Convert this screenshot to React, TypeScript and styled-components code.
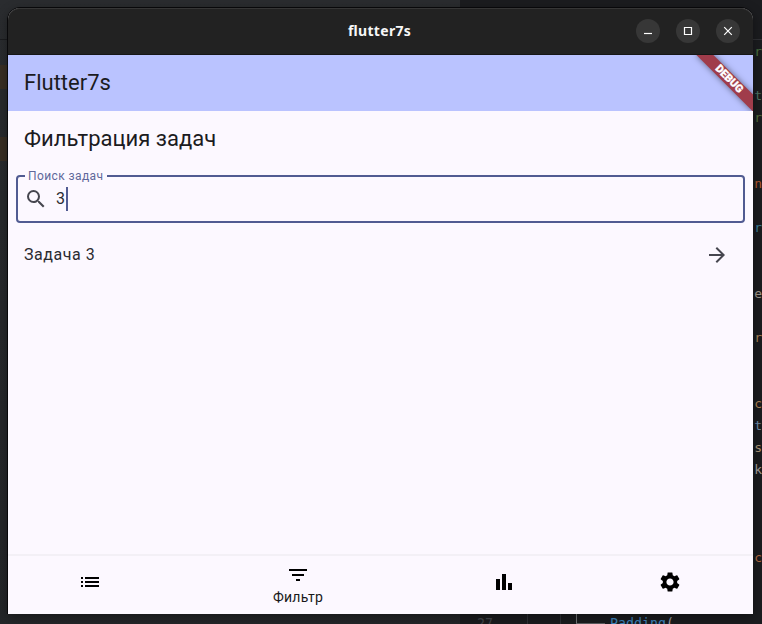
import React from "react";
import styled, { createGlobalStyle } from "styled-components";

const GlobalStyle = createGlobalStyle`
  * { box-sizing: border-box; }
  body { margin: 0; overflow: hidden; background: #1b1c1f; }
`;

const Desktop = styled.div`
  position: relative;
  display: grid;
  grid-template-columns: 460px 1fr;
  width: 762px;
  height: 624px;
  overflow: hidden;
`;

const ProjectPane = styled.div`
  display: flex;
  flex-direction: column;
  background: linear-gradient(#2a2c2f, #27292c 50%, #242629);
`;

const PaneBlock = styled.div<{ $height: number; $color?: string }>`
  flex: none;
  height: ${(p) => p.$height}px;
  background: ${(p) => p.$color ?? "transparent"};
`;

const PaneFooter = styled.div`
  display: flex;
  margin-top: auto;
  height: 2px;
  padding-left: 52px;
  background: #251d26;
`;

const FooterGlyph = styled.div`
  width: 6px;
  height: 2px;
  background: #a9a5ac;
`;

const EditorPane = styled.div`
  display: flex;
  flex-direction: column;
  background: #1b1c1f;
`;

const EditorTop = styled.div`
  flex: none;
  height: 40px;
  margin-bottom: 1px;
  border-bottom: 1px solid #303135;
`;

const CodeLine = styled.div<{ $color?: string }>`
  flex: none;
  height: 22px;
  font: 13px/22px "DejaVu Sans Mono", monospace;
  text-align: right;
  color: ${(p) => p.$color ?? "transparent"};
`;

const BottomLine = styled.div`
  display: flex;
  flex: none;
  height: 22px;
  font: 13.3px/22px "DejaVu Sans Mono", monospace;
  color: #3f86c0;
`;

const LineNumber = styled.span`
  width: 67px;
  padding-left: 17px;
  color: #43464c;
`;

const Guide = styled.span<{ $width: number; $color?: string }>`
  width: ${(p) => p.$width}px;
  border-left: 1px solid ${(p) => p.$color ?? "#303236"};
`;

const Branch = styled.span`
  width: 29px;
  height: 11px;
  margin-right: 5px;
  border-left: 1px solid #77787a;
  border-bottom: 1px solid #5c5d60;
`;

const Paren = styled.span`
  color: #a0a2a8;
`;

const Window = styled.div`
  position: absolute;
  left: 8px;
  top: 8px;
  width: 745px;
  height: 606px;
  display: flex;
  flex-direction: column;
  border-radius: 12px 12px 0 0;
  background: #fcf8ff;
  font-family: Roboto, sans-serif;
  box-shadow: -1px 0 0 #08080a, 0 -1px 0 #08080a, 0 3px 12px rgba(0, 0, 0, 0.4);
`;

const TitleBar = styled.header`
  flex: none;
  display: grid;
  grid-template-columns: 1fr auto 1fr;
  align-items: center;
  height: 47px;
  padding-right: 13px;
  padding-left: 13px;
  border-radius: 12px 12px 0 0;
  border-bottom: 1px solid #161616;
  background: #222;
  box-shadow: inset 0 1px 0 #363636;
`;

const WindowTitle = styled.span`
  grid-column: 2;
  margin-left: -2px;
  font: bold 14px/20px "Noto Sans", sans-serif;
  letter-spacing: 0.3px;
  color: #f7f7f7;
`;

const Controls = styled.div`
  display: flex;
  justify-content: flex-end;
  gap: 16px;
`;

const ControlButton = styled.button`
  display: flex;
  width: 24px;
  height: 24px;
  padding: 0;
  border: 0;
  border-radius: 50%;
  background: #373737;
`;

const AppBar = styled.div`
  position: relative;
  flex: none;
  display: flex;
  align-items: center;
  height: 56px;
  padding: 0 0 2px 16px;
  overflow: hidden;
  background: #bac3ff;
  color: #1b1b21;
  font-size: 22px;
`;

const DebugBanner = styled.div`
  position: absolute;
  right: -40px;
  top: 28px;
  width: 80px;
  height: 12px;
  transform-origin: 40px -28px;
  transform: rotate(45deg);
  background: #a03c4b;
  box-shadow: 0 0 6px rgba(0, 0, 0, 0.5);
  color: #fff;
  font: 900 10.8px/12px Roboto, sans-serif;
  -webkit-text-stroke: 0.3px #fff;
  text-align: center;
`;

const Heading = styled.h1`
  flex: none;
  height: 56px;
  margin: 0;
  padding-left: 16px;
  font-size: 22px;
  font-weight: 400;
  line-height: 55px;
  color: #1b1b21;
`;

const SearchField = styled.fieldset`
  flex: none;
  display: flex;
  height: 54px;
  margin: 2px 8px 0;
  padding: 0 0 0 6px;
  min-width: 0;
  border: 2px solid #515b92;
  border-radius: 4px;
`;

const FieldLabel = styled.legend`
  height: 14px;
  margin-left: 1px;
  padding: 0 4px 0 3px;
  font-size: 12px;
  line-height: 14px;
  letter-spacing: 0.4px;
  color: #5f689b;
`;

const FieldRow = styled.div`
  display: flex;
  align-items: center;
  height: 32px;
  font-size: 16px;
  letter-spacing: 0.5px;
  color: #2b2b31;
`;

const FieldValue = styled.span`
  margin-left: 8px;
  padding-bottom: 2px;
`;

const Caret = styled.span`
  width: 2px;
  height: 24px;
  background: #515b92;
`;

const TaskRow = styled.div`
  flex: none;
  display: flex;
  align-items: center;
  justify-content: space-between;
  height: 56px;
  margin-top: 4px;
  padding: 0 24px 0 16px;
  font-size: 16px;
  letter-spacing: 0.55px;
  color: #2b2b31;
`;

const TaskName = styled.span`
  padding-bottom: 2px;
`;

const BottomNav = styled.nav`
  display: flex;
  height: 60px;
  margin-top: auto;
  border-top: 2px solid #f3f0f6;
  color: #000;
`;

const NavItem = styled.div<{ $active?: boolean }>`
  flex: ${(p) => (p.$active ? 1.5 : 1)} 1 0;
  display: flex;
  flex-direction: column;
  align-items: center;
  padding-top: ${(p) => (p.$active ? 7 : 14)}px;
  padding-right: ${(p) => (p.$active ? 0 : 1)}px;
`;

const NavLabel = styled.span`
  margin-left: 1px;
  font-size: 14px;
  line-height: 20px;
  letter-spacing: 0.25px;
  color: #18181a;
`;

const IconSvg = styled.svg<{ $size: number; $color: string }>`
  flex: none;
  display: block;
  width: ${(p) => p.$size}px;
  height: ${(p) => p.$size}px;
  fill: ${(p) => p.$color};
`;

const paths = {
  search:
    "M15.5 14h-.79l-.28-.27A6.471 6.471 0 0 0 16 9.5 6.5 6.5 0 1 0 9.5 16c1.61 0 3.09-.59 4.23-1.57l.27.28v.79l5 4.99L20.49 19l-4.99-5zm-6 0C7.01 14 5 11.99 5 9.5S7.01 5 9.5 5 14 7.01 14 9.5 11.99 14 9.5 14z",
  arrow: "M12 4l-1.41 1.41L16.17 11H4v2h12.17l-5.58 5.59L12 20l8-8z",
  list: "M3 13h2v-2H3v2zm0 4h2v-2H3v2zm0-8h2V7H3v2zm4 4h14v-2H7v2zm0 4h14v-2H7v2zM7 7v2h14V7H7z",
  filter: "M10 18h4v-2h-4v2zM3 6v2h18V6H3zm3 7h12v-2H6v2z",
  chart: "M4 9h4v11H4zM16 13h4v7h-4zM10 4h4v16h-4z",
  settings:
    "M19.14 12.94c.04-.3.06-.61.06-.94 0-.32-.02-.64-.07-.94l2.03-1.58c.18-.14.23-.41.12-.61l-1.92-3.32c-.12-.22-.37-.29-.59-.22l-2.39.96c-.5-.38-1.03-.7-1.62-.94l-.36-2.54c-.04-.24-.24-.41-.48-.41h-3.84c-.24 0-.43.17-.47.41l-.36 2.54c-.59.24-1.13.57-1.62.94l-2.39-.96c-.22-.08-.47 0-.59.22L2.74 8.87c-.12.21-.08.47.12.61l2.03 1.58c-.05.3-.09.63-.09.94s.02.64.07.94l-2.03 1.58c-.18.14-.23.41-.12.61l1.92 3.32c.12.22.37.29.59.22l2.39-.96c.5.38 1.03.7 1.62.94l.36 2.54c.05.24.24.41.48.41h3.84c.24 0 .44-.17.47-.41l.36-2.54c.59-.24 1.13-.56 1.62-.94l2.39.96c.22.08.47 0 .59-.22l1.92-3.32c.12-.22.07-.47-.12-.61l-2.01-1.58zM12 15.6c-1.98 0-3.6-1.62-3.6-3.6s1.62-3.6 3.6-3.6 3.6 1.62 3.6 3.6-1.62 3.6-3.6 3.6z",
};

function Icon({ name, size = 24, color = "#000" }: { name: keyof typeof paths; size?: number; color?: string }) {
  return (
    <IconSvg viewBox="0 0 24 24" $size={size} $color={color}>
      <path d={paths[name]} />
    </IconSvg>
  );
}

const codeLines: [string, string?][] = [
  ["r", "#4a7040"], [""], ["t", "#4d7565"], ["r", "#526c3c"], [""], [""], ["n", "#b3582d"], [""],
  ["r", "#3c7f99"], [""], [""], ["e", "#a0988c"], [""], ["r", "#a8825a"], [""], [""],
  ["c", "#b08456"], ["t", "#6f8dab"], ["s", "#ac967a"], ["k", "#a5a09b"], [""], [""], [""],
  ["c", "#b36a41"], [""], [""],
];

const glyphs = [
  "M8 14.5h8",
  "M8.5 8.5h7v7h-7z",
  "M8.2 8.2l7.6 7.6M15.8 8.2l-7.6 7.6",
];

export default function App() {
  return (
    <>
      <GlobalStyle />
      <Desktop>
        <ProjectPane>
          <PaneBlock $height={39} />
          <PaneBlock $height={1} $color="#1b1c1f" />
          <PaneBlock $height={25} />
          <PaneBlock $height={24} $color="#392f24" />
          <PaneBlock $height={48} />
          <PaneBlock $height={24} $color="#392f24" />
          <PaneFooter><FooterGlyph /></PaneFooter>
        </ProjectPane>
        <EditorPane>
          <EditorTop />
          {codeLines.map(([text, color], i) => (
            <CodeLine key={i} $color={color}>{text}</CodeLine>
          ))}
          <BottomLine>
            <LineNumber>27</LineNumber>
            <Guide $width={33} />
            <Guide $width={16} />
            <Branch />
            <span>Padding</span><Paren>(</Paren>
          </BottomLine>
        </EditorPane>

        <Window>
          <TitleBar>
            <WindowTitle>flutter7s</WindowTitle>
            <Controls>
              {glyphs.map((d) => (
                <ControlButton key={d}>
                  <svg width="24" height="24" fill="none" stroke="#fff" strokeWidth="1.2"><path d={d} /></svg>
                </ControlButton>
              ))}
            </Controls>
          </TitleBar>
          <AppBar>
            Flutter7s
            <DebugBanner>DEBUG</DebugBanner>
          </AppBar>
          <Heading>Фильтрация задач</Heading>
          <SearchField>
            <FieldLabel>Поиск задач</FieldLabel>
            <FieldRow>
              <Icon name="search" color="#46464f" />
              <FieldValue>3</FieldValue>
              <Caret />
            </FieldRow>
          </SearchField>
          <TaskRow>
            <TaskName>Задача 3</TaskName>
            <Icon name="arrow" color="#46464f" />
          </TaskRow>
          <BottomNav>
            <NavItem><Icon name="list" /></NavItem>
            <NavItem $active><Icon name="filter" /><NavLabel>Фильтр</NavLabel></NavItem>
            <NavItem><Icon name="chart" /></NavItem>
            <NavItem><Icon name="settings" /></NavItem>
          </BottomNav>
        </Window>
      </Desktop>
    </>
  );
}
